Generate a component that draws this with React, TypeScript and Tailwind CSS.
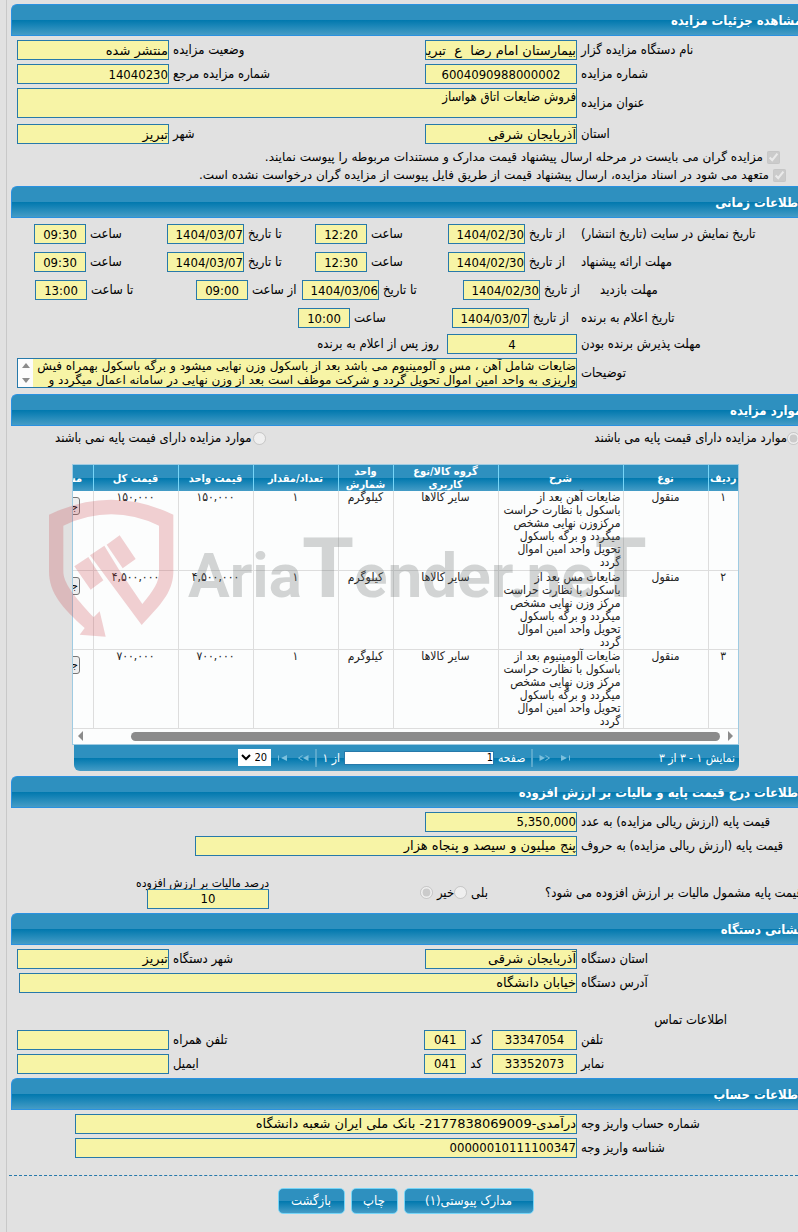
import type { ReactNode } from "react";
import clsx from "clsx";

type FieldProps = {
  id: string;
  label: string;
  value?: string;
  width: string;
  align?: string;
  labelClass?: string;
  className?: string;
  ltr?: boolean;
};

const box = "border border-[#2779aa] bg-[#f7f4a6] text-black outline-none";
const wideFont = "font-['DejaVu_Sans',sans-serif]";

// label first, box after it (rtl)
function Field({ id, label, value = "", width, align = "text-right", labelClass, className, ltr }: FieldProps) {
  return (
    <div className={clsx("flex shrink-0 items-center gap-1", className)}>
      <label htmlFor={id} className={clsx("shrink-0 whitespace-nowrap", labelClass)}>
        {label}
      </label>
      <input
        id={id}
        readOnly
        dir={ltr ? "ltr" : "rtl"}
        defaultValue={value}
        className={clsx(box, "h-5 shrink-0 text-[13px]", width, align, !ltr && wideFont)}
      />
    </div>
  );
}

const mainLabel = "w-[217px] text-left";

function Row({ children, className }: { children: ReactNode; className?: string }) {
  return <div className={clsx("flex h-5 items-center pl-1.5", className)}>{children}</div>;
}

function SectionTitle({ children, className }: { children: ReactNode; className?: string }) {
  return (
    <h2
      className={clsx(
        "flex h-8 items-center overflow-hidden rounded-tl-md border border-r-0 border-[#2a91e0] bg-[linear-gradient(#2e90bf_50%,#0078ae_50%,#459cc6)] pt-0.5 text-[13px] font-bold text-white",
        className
      )}
    >
      <span className="-mr-1 whitespace-nowrap">{children}</span>
    </h2>
  );
}

type Slot = { id: string; label: string; value: string; cell: string; time?: boolean };

function TimeRow({ title, titleClass, slots }: { title: string; titleClass: string; slots: Slot[] }) {
  return (
    <Row>
      <span className={clsx("shrink-0 whitespace-nowrap text-left", titleClass)}>{title}</span>
      {slots.map((s) => (
        <Field
          key={s.id}
          id={s.id}
          label={s.label}
          value={s.value}
          ltr
          width={s.time ? "w-[52px]" : "w-[77px]"}
          align={s.time ? "text-center" : "text-right"}
          className={clsx("justify-end", s.cell)}
        />
      ))}
    </Row>
  );
}

const columns = [
  { title: "ردیف", width: "w-[30px]" },
  { title: "نوع", width: "w-[85px]" },
  { title: "شرح", width: "w-[125px]" },
  { title: "گروه کالا/نوع کاربری", width: "w-[105px] px-4" },
  { title: "واحد شمارش", width: "w-[55px]" },
  { title: "تعداد/مقدار", width: "w-[85px]" },
  { title: "قیمت واحد", width: "w-[75px]" },
  { title: "قیمت کل", width: "w-[85px]" },
  { title: "مشاهده", width: "w-[60px]" },
];

const items = [
  {
    no: "۱",
    lines: ["ضایعات آهن بعد از", "باسکول با نظارت حراست", "مرکزوزن نهایی مشخص", "میگردد و برگه باسکول", "تحویل واحد امین اموال", "گردد"],
    price: "۱۵۰,۰۰۰",
  },
  {
    no: "۲",
    lines: ["ضایعات مس بعد از", "باسکول با نظارت حراست", "مرکز وزن نهایی مشخص", "میگردد و برگه باسکول", "تحویل واحد امین اموال", "گردد"],
    price: "۴,۵۰۰,۰۰۰",
  },
  {
    no: "۳",
    lines: ["ضایعات آلومینیوم بعد از", "باسکول با نظارت حراست", "مرکز وزن نهایی مشخص", "میگردد و برگه باسکول", "تحویل واحد امین اموال", "گردد"],
    price: "۷۰۰,۰۰۰",
  },
];

function Watermark() {
  return (
    <div dir="ltr" className="pointer-events-none absolute top-[35px] -left-[23px] flex">
      <svg width="125" height="138" viewBox="150 328 375 414" fill="rgba(205,70,80,0.25)">
        <path d="M150 375Q337 286 523 375L523 550C520 610 485 645 428 706L273 497L316 468L362 543L430 643C465 600 480 580 480 545L480 408Q337 340 193 408L193 545C193 580 225 620 284 683L302 665L320 741L242 735L257 715C190 655 150 610 150 545Z" />
        <path d="M323 465L362 437L410 508L371 536ZM226 530L268 502L313 572L275 600Z" />
      </svg>
      <span className="mt-[26px] ml-3.5 font-['Roboto',sans-serif] text-[62px] leading-[88px] font-bold whitespace-nowrap text-[rgba(90,95,95,0.26)]">
        Aria<span className="text-[84px]">T</span>ender.ne<span className="text-[84px]">T</span>
      </span>
    </div>
  );
}

function PagerIcon({ flip, first }: { flip?: boolean; first?: boolean }) {
  return (
    <svg width="12" height="8" viewBox="0 0 12 8" className={clsx("shrink-0", flip && "-scale-x-100")}>
      {first ? (
        <path d="M1 1.5h1v5H1zM10 1v6L4 4z" fill="#7cc0dd" />
      ) : (
        <>
          <path d="M5.500 1.500L1.500 4l4 2.500" fill="none" stroke="#7cc0dd" />
          <path d="M11.500 1v6L6 4z" fill="#7cc0dd" />
        </>
      )}
    </svg>
  );
}

function ItemsGrid() {
  return (
    <div className="relative mr-[59px] ml-[61px]">
      <div className="overflow-hidden border border-[#9fcbe2] bg-[#fcfdfd]">
        <table className="w-[705px] table-fixed border-collapse text-[12px] leading-[13px]">
          <thead>
            <tr className="h-[26px] bg-[linear-gradient(#2e90bf_50%,#0078ae_50%,#459cc6)] text-[11px] text-white">
              {columns.map((c) => (
                <th key={c.title} className={clsx("border-l border-[#77d5f7] py-0", c.width)}>
                  {c.title}
                </th>
              ))}
            </tr>
          </thead>
          <tbody className="text-[#222]">
            {items.map((it) => (
              <tr key={it.no} className="h-[79px] text-center align-top [&>td]:border-b [&>td]:border-l [&>td]:border-[#dddddd] [&>td]:p-0">
                <td>{it.no}</td>
                <td>منقول</td>
                <td>
                  {it.lines.map((l) => (
                    <div key={l} className="pr-0.5 text-right whitespace-nowrap">
                      {l}
                    </div>
                  ))}
                </td>
                <td>سایر کالاها</td>
                <td>کیلوگرم</td>
                <td>۱</td>
                <td>{it.price}</td>
                <td>{it.price}</td>
                <td>
                  <button className="mt-1.5 h-[18px] w-[34px] overflow-hidden rounded-[3px] border border-[#767676] bg-[#efefef] text-[11px] text-black">
                    جزئیات
                  </button>
                </td>
              </tr>
            ))}
          </tbody>
        </table>
        <div dir="ltr" className="flex h-[15px] items-center justify-between px-1">
          <svg width="7" height="10" viewBox="0 0 7 10" fill="#8b8b8b">
            <path d="M6 0v10L1 5z" />
          </svg>
          <div className="mr-[7px] ml-[47px] h-[9px] grow rounded-full bg-[#8b8b8b]" />
          <svg width="7" height="10" viewBox="0 0 7 10" fill="#8b8b8b">
            <path d="M1 0v10l5-5z" />
          </svg>
        </div>
      </div>
      <div className="ml-0.5 flex h-[26px] items-center rounded-b-md bg-[linear-gradient(#2e90bf_50%,#0078ae_50%,#459cc6)] text-[12px] text-white">
        <span className="flex-1 pr-1">نمایش ۱ - ۳ از ۳</span>
        <div className="flex items-center">
          <button aria-label="اولین صفحه" className="ml-1">
            <PagerIcon flip first />
          </button>
          <button aria-label="صفحه قبل" className="mr-1">
            <PagerIcon flip />
          </button>
          <span className="mx-1.5 h-[18px] w-0.5 bg-[#5aa9cd]" />
          <label htmlFor="page">صفحه</label>
          <input id="page" defaultValue="1" className="mx-1 h-[14px] w-[150px] border border-[#2779aa] bg-white text-right text-[11px] text-black" />
          <span>از ۱</span>
          <span className="mx-1.5 h-[18px] w-0.5 bg-[#5aa9cd]" />
          <button aria-label="صفحه بعد" className="ml-1">
            <PagerIcon />
          </button>
          <button aria-label="آخرین صفحه" className="mr-1">
            <PagerIcon first />
          </button>
          <div className="relative mr-1.5 flex items-center">
            <select aria-label="تعداد در صفحه" dir="ltr" className="h-[17px] w-[33px] appearance-none bg-white pl-[17px] text-[11px] text-black">
              <option>20</option>
            </select>
            <svg width="10" height="7" viewBox="0 0 10 7" className="pointer-events-none absolute left-[3px]">
              <path d="M1 1l4 4 4-4" fill="none" stroke="#000" strokeWidth="2" />
            </svg>
          </div>
        </div>
        <span className="flex-1" />
      </div>
      <Watermark />
    </div>
  );
}

const btn =
  "h-[26px] rounded-[5px] border border-[#77d5f7] bg-[linear-gradient(#2e90bf_50%,#0078ae_50%,#459cc6)] text-[13px] text-white";

export default function App() {
  return (
    <div dir="rtl" className="overflow-hidden bg-[#e1e1e1] pl-1.5 font-['DejaVu_Sans_Condensed','DejaVu_Sans',sans-serif] text-[13px] leading-4 text-black">
      <main className="border-l border-[#c8c8c8] pt-1 pb-[18px]">
        <div className="pl-1">
          <SectionTitle>مشاهده جزئیات مزایده</SectionTitle>
          <div className="flex flex-col gap-1 pt-1">
            <Row className="justify-between">
              <Field id="org" label="نام دستگاه مزایده گزار" value="بیمارستان امام رضا  ع  تبریز" width="w-[152px]" labelClass={mainLabel} />
              <Field id="status" label="وضعیت مزایده" value="منتشر شده" width="w-[152px]" />
            </Row>
            <Row className="justify-between">
              <Field id="number" label="شماره مزایده" value="6004090988000002" width="w-[152px]" align="text-center" ltr labelClass={mainLabel} />
              <Field id="ref" label="شماره مزایده مرجع" value="14040230" width="w-[152px]" ltr />
            </Row>
            <div className="flex items-center gap-1 pl-1.5">
              <label htmlFor="subject" className={clsx("shrink-0", mainLabel)}>عنوان مزایده</label>
              <textarea id="subject" readOnly defaultValue="فروش ضایعات اتاق هواساز" className={clsx(box, "h-[30px] grow resize-none overflow-hidden leading-4")} />
            </div>
            <Row className="mt-0.5 justify-between">
              <Field id="province" label="استان" value="آذربایجان شرقی" width="w-[152px]" labelClass={mainLabel} />
              <Field id="city" label="شهر" value="تبریز" width="w-[152px]" />
            </Row>
          </div>
          <div className={clsx("pt-1 pb-0.5 text-[12px]", wideFont)}>
            <label className="flex h-[18px] items-center gap-1 pr-[18px]">
              <input type="checkbox" defaultChecked disabled />
              مزایده گران می بایست در مرحله ارسال پیشنهاد قیمت مدارک و مستندات مربوطه را پیوست نمایند.
            </label>
            <label className="flex h-[18px] items-center gap-1 pr-3">
              <input type="checkbox" defaultChecked disabled />
              متعهد می شود در اسناد مزایده، ارسال پیشنهاد قیمت از طریق فایل پیوست از مزایده گران درخواست نشده است.
            </label>
          </div>

          <SectionTitle>اطلاعات زمانی</SectionTitle>
          <div className="flex flex-col gap-2 pt-1.5">
            <TimeRow
              title="تاریخ نمایش در سایت (تاریخ انتشار)"
              titleClass="w-[217px]"
              slots={[
                { id: "show-from", label: "از تاریخ", value: "1404/02/30", cell: "w-[133px]" },
                { id: "show-from-h", label: "ساعت", value: "12:20", cell: "w-[133px]", time: true },
                { id: "show-to", label: "تا تاریخ", value: "1404/03/07", cell: "w-[148px]" },
                { id: "show-to-h", label: "ساعت", value: "09:30", cell: "w-[133px]", time: true },
              ]}
            />
            <TimeRow
              title="مهلت ارائه پیشنهاد"
              titleClass="w-[217px]"
              slots={[
                { id: "offer-from", label: "از تاریخ", value: "1404/02/30", cell: "w-[133px]" },
                { id: "offer-from-h", label: "ساعت", value: "12:30", cell: "w-[133px]", time: true },
                { id: "offer-to", label: "تا تاریخ", value: "1404/03/07", cell: "w-[148px]" },
                { id: "offer-to-h", label: "ساعت", value: "09:30", cell: "w-[133px]", time: true },
              ]}
            />
            <TimeRow
              title="مهلت بازدید"
              titleClass="w-[198px]"
              slots={[
                { id: "visit-from", label: "از تاریخ", value: "1404/02/30", cell: "w-[137px]" },
                { id: "visit-to", label: "تا تاریخ", value: "1404/03/06", cell: "w-[161px]" },
                { id: "visit-from-h", label: "از ساعت", value: "09:00", cell: "w-[106px]", time: true },
                { id: "visit-to-h", label: "تا ساعت", value: "13:00", cell: "w-[161px]", time: true },
              ]}
            />
            <TimeRow
              title="تاریخ اعلام به برنده"
              titleClass="w-[217px]"
              slots={[
                { id: "winner", label: "از تاریخ", value: "1404/03/07", cell: "w-[129px]" },
                { id: "winner-h", label: "ساعت", value: "10:00", cell: "w-[154px]", time: true },
              ]}
            />
          </div>
          <Row className="mt-1.5 gap-2">
            <Field id="accept" label="مهلت پذیرش برنده بودن" value="4" width="w-[130px]" align="text-center" ltr labelClass={mainLabel} />
            <span>روز پس از اعلام به برنده</span>
          </Row>
          <div className="flex items-center gap-1 pt-1 pb-1.5 pl-1.5">
            <label htmlFor="notes" className={clsx("shrink-0", mainLabel)}>توضیحات</label>
            <div className={clsx(box, "flex h-[30px] grow")}>
              <textarea
                id="notes"
                readOnly
                wrap="off"
                defaultValue={"ضایعات شامل آهن ، مس و آلومینیوم می باشد بعد از باسکول وزن نهایی میشود و برگه باسکول بهمراه فیش\nواریزی به واحد امین اموال تحویل گردد و شرکت موظف است بعد از وزن نهایی در سامانه اعمال میگردد و"}
                className={clsx("grow resize-none overflow-hidden text-[12px] leading-[14px] outline-none", wideFont)}
              />
              <div className="flex w-[15px] flex-col items-center justify-between bg-[#fcfcfc] py-1">
                <svg width="8" height="5" viewBox="0 0 8 5" fill="#8b8b8b">
                  <path d="M0 5h8L4 0z" />
                </svg>
                <svg width="8" height="5" viewBox="0 0 8 5" fill="#8b8b8b">
                  <path d="M0 0h8L4 5z" />
                </svg>
              </div>
            </div>
          </div>

          <SectionTitle>موارد مزایده</SectionTitle>
          <div className="flex h-[38px] items-start justify-between pt-1 pl-11">
            <label className="-mr-0.5 flex items-center">
              <input type="radio" name="base" defaultChecked disabled />
              موارد مزایده دارای قیمت پایه می باشند
            </label>
            <label className="flex items-center gap-0.5">
              <input type="radio" name="base" disabled />
              موارد مزایده دارای فیمت پایه نمی باشند
            </label>
          </div>
          <ItemsGrid />

          <SectionTitle className="mt-[5px]">اطلاعات درج قیمت پایه و مالیات بر ارزش افزوده</SectionTitle>
          <div className="flex flex-col gap-1 pt-1">
            <Row>
              <Field id="price" label="قیمت پایه (ارزش ریالی مزایده) به عدد" value="5,350,000" width="w-[152px]" ltr labelClass={mainLabel} />
            </Row>
            <Row>
              <Field id="price-text" label="قیمت پایه (ارزش ریالی مزایده) به حروف" value="پنج میلیون و سیصد و پنجاه هزار" width="w-[382px]" labelClass={mainLabel} />
            </Row>
          </div>
          <div className="flex h-[57px] items-end justify-between pb-1">
            <div className="-mr-1 flex items-center pb-2">
              <span className="w-[256px] text-left whitespace-nowrap">قیمت پایه مشمول مالیات بر ارزش افزوده می شود؟</span>
              <label className="mr-[58px] flex items-center gap-1">
                بلی
                <input type="radio" name="vat" disabled />
              </label>
              <label className="flex items-center gap-1">
                خیر
                <input type="radio" name="vat" defaultChecked disabled />
              </label>
            </div>
            <div className="flex w-[258px] flex-col items-start">
              <label htmlFor="vat-percent" className="h-3 text-[12px] leading-3">درصد مالیات بر ارزش افزوده</label>
              <input id="vat-percent" readOnly defaultValue="10" className={clsx(box, "h-5 w-[122px] text-center text-[13px]")} />
            </div>
          </div>

          <SectionTitle>نشانی دستگاه</SectionTitle>
          <div className="flex flex-col gap-1 pt-1">
            <Row className="justify-between">
              <Field id="org-province" label="استان دستگاه" value="آذربایجان شرقی" width="w-[152px]" labelClass={mainLabel} />
              <Field id="org-city" label="شهر دستگاه" value="تبریز" width="w-[152px]" />
            </Row>
            <div className="flex h-5 items-center gap-1 pl-2">
              <label htmlFor="address" className={clsx("shrink-0", mainLabel)}>آدرس دستگاه</label>
              <input id="address" readOnly defaultValue="خیابان دانشگاه" className={clsx(box, wideFont, "h-5 grow text-[13px]")} />
            </div>
          </div>
          <p className="pt-[19px] pr-[71px] pb-0.5">اطلاعات تماس</p>
          <div className="flex flex-col gap-1 pb-1">
            <Row className="justify-between">
              <div className="flex gap-2.5">
                <Field id="phone" label="تلفن" value="33347054" width="w-[85px]" align="text-center" ltr labelClass={mainLabel} />
                <Field id="phone-code" label="کد" value="041" width="w-[42px]" align="text-center" ltr />
              </div>
              <Field id="mobile" label="تلفن همراه" width="w-[152px]" />
            </Row>
            <Row className="justify-between">
              <div className="flex gap-2.5">
                <Field id="fax" label="نمابر" value="33352073" width="w-[85px]" align="text-center" ltr labelClass={mainLabel} />
                <Field id="fax-code" label="کد" value="041" width="w-[42px]" align="text-center" ltr />
              </div>
              <Field id="email" label="ایمیل" width="w-[152px]" />
            </Row>
          </div>

          <SectionTitle>اطلاعات حساب</SectionTitle>
          <div className="flex flex-col gap-1 pt-1">
            <Row>
              <Field id="account" label="شماره حساب واریز وجه" value="درآمدی-2177838069009- بانک ملی ایران شعبه دانشگاه" width="w-[502px]" labelClass={mainLabel} />
            </Row>
            <Row>
              <Field id="deposit" label="شناسه واریز وجه" value="00000010111100347" width="w-[502px]" ltr labelClass={mainLabel} />
            </Row>
          </div>
        </div>
        <div className="mt-[17px] ml-0.5 border-t border-dashed border-[#2779aa]" />
        <div className="mt-3 flex justify-center gap-1.5 pl-1.5">
          <button className={clsx(btn, "w-[130px]")}>مدارک پیوستی(۱)</button>
          <button className={clsx(btn, "w-[47px]")}>چاپ</button>
          <button className={clsx(btn, "w-[67px]")}>بازگشت</button>
        </div>
      </main>
    </div>
  );
}
